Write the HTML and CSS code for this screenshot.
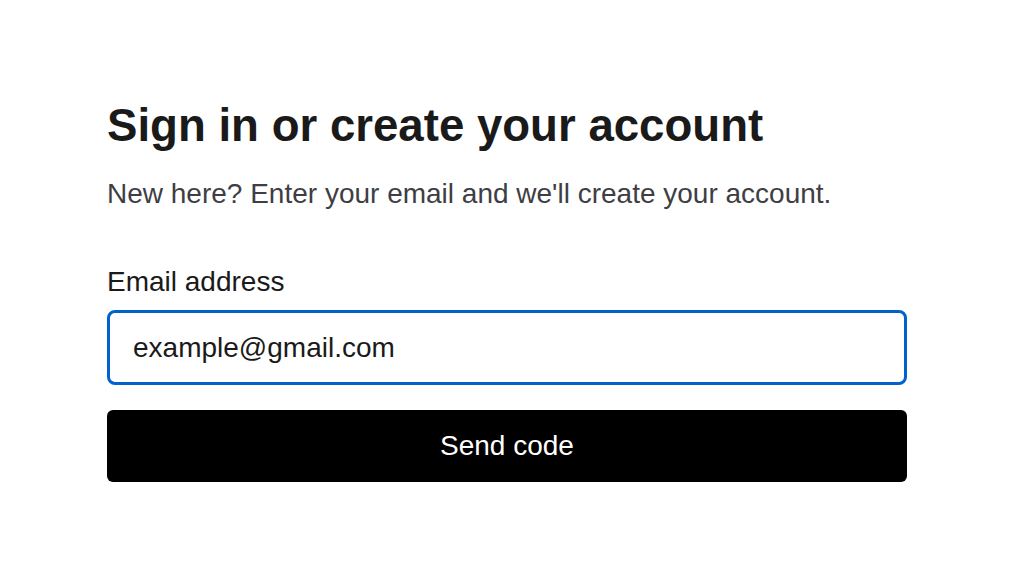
FILE: index.html
```html
<!DOCTYPE html>
<html lang="en">
<head>
<meta charset="utf-8">
<title>Sign in</title>
<link rel="stylesheet" href="styles.css">
</head>
<body>
<main class="page">
  <form class="signin">
    <h1 class="title">Sign in or create your account</h1>
    <p class="subtitle">New here? Enter your email and we'll create your account.</p>
    <label class="label" for="email">Email address</label>
    <input class="input" id="email" type="email" value="example@gmail.com">
    <button class="btn" type="button">Send code</button>
  </form>
</main>
</body>
</html>
```
FILE: styles.css
```css
html, body {
  margin: 0;
  padding: 0;
  background: #ffffff;
}
body {
  font-family: "Liberation Sans", Arial, sans-serif;
  color: #1a1a1a;
}
.page {
  padding: 98px 0 0 107px;
}
.signin {
  width: 800px;
  display: flex;
  flex-direction: column;
}
.title {
  margin: 0;
  font-size: 45.6px;
  line-height: 56px;
  font-weight: 700;
  color: #1a1a1a;
}
.subtitle {
  margin: 24px 0 0;
  font-size: 28px;
  line-height: 32px;
  color: #3e3e44;
}
.label {
  margin-top: 56px;
  font-size: 28px;
  line-height: 32px;
  color: #1a1a1a;
}
.input {
  margin-top: 12px;
  box-sizing: border-box;
  height: 75px;
  width: 800px;
  border: 3px solid #0063cc;
  border-radius: 8px;
  padding: 0 23px;
  font-family: "Liberation Sans", Arial, sans-serif;
  font-size: 28px;
  color: #1a1a1a;
  outline: none;
  background: #fff;
}
.btn {
  margin-top: 25px;
  height: 72px;
  width: 800px;
  border: none;
  border-radius: 6px;
  background: #000;
  color: #fff;
  font-family: "Liberation Sans", Arial, sans-serif;
  font-size: 28px;
  cursor: pointer;
}
```
